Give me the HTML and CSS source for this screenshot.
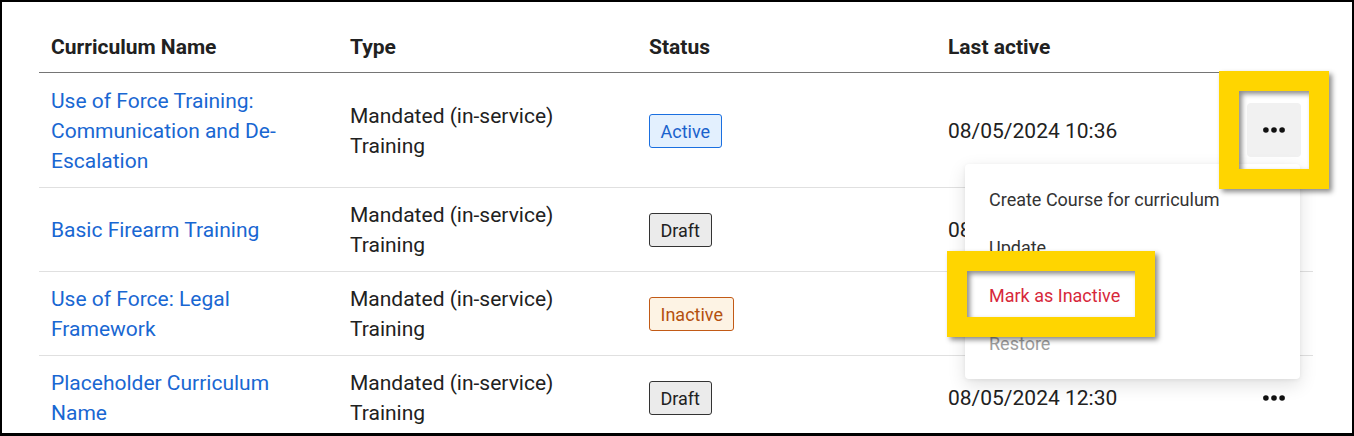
FILE: index.html
```html
<!DOCTYPE html>
<html lang="en">
<head>
<meta charset="utf-8">
<title>Curricula</title>
<link rel="stylesheet" href="styles.css">
</head>
<body>
<div class="frame">
  <div class="table">
    <div class="row head">
      <div class="cell name">Curriculum Name</div>
      <div class="cell">Type</div>
      <div class="cell">Status</div>
      <div class="cell">Last active</div>
      <div class="cell act"></div>
    </div>
    <div class="row first">
      <div class="cell name"><a href="#">Use of Force Training: Communication and De-Escalation</a></div>
      <div class="cell">Mandated (in-service) Training</div>
      <div class="cell"><span class="badge active">Active</span></div>
      <div class="cell">08/05/2024 10:36</div>
      <div class="cell act"><button class="more pressed" type="button" aria-label="More actions"><svg width="22" height="6" viewBox="0 0 22 6"><circle cx="2.9" cy="3" r="2.8"/><circle cx="11" cy="3" r="2.8"/><circle cx="19.1" cy="3" r="2.8"/></svg></button></div>
    </div>
    <div class="row">
      <div class="cell name"><a href="#">Basic Firearm Training</a></div>
      <div class="cell">Mandated (in-service) Training</div>
      <div class="cell"><span class="badge draft">Draft</span></div>
      <div class="cell">08/05/2024 11:02</div>
      <div class="cell act"><button class="more" type="button" aria-label="More actions"><svg width="22" height="6" viewBox="0 0 22 6"><circle cx="2.9" cy="3" r="2.8"/><circle cx="11" cy="3" r="2.8"/><circle cx="19.1" cy="3" r="2.8"/></svg></button></div>
    </div>
    <div class="row">
      <div class="cell name"><a href="#">Use of Force: Legal Framework</a></div>
      <div class="cell">Mandated (in-service) Training</div>
      <div class="cell"><span class="badge inactive">Inactive</span></div>
      <div class="cell">08/05/2024 11:45</div>
      <div class="cell act"><button class="more" type="button" aria-label="More actions"><svg width="22" height="6" viewBox="0 0 22 6"><circle cx="2.9" cy="3" r="2.8"/><circle cx="11" cy="3" r="2.8"/><circle cx="19.1" cy="3" r="2.8"/></svg></button></div>
    </div>
    <div class="row">
      <div class="cell name"><a href="#">Placeholder Curriculum Name</a></div>
      <div class="cell">Mandated (in-service) Training</div>
      <div class="cell"><span class="badge draft">Draft</span></div>
      <div class="cell">08/05/2024 12:30</div>
      <div class="cell act"><button class="more" type="button" aria-label="More actions"><svg width="22" height="6" viewBox="0 0 22 6"><circle cx="2.9" cy="3" r="2.8"/><circle cx="11" cy="3" r="2.8"/><circle cx="19.1" cy="3" r="2.8"/></svg></button></div>
    </div>
  </div>

  <ul class="menu">
    <li>Create Course for curriculum</li>
    <li>Update</li>
    <li class="danger">Mark as Inactive</li>
    <li class="disabled">Restore</li>
  </ul>

  <div class="hl hl-button"></div>
  <div class="hl hl-item"></div>
</div>
</body>
</html>
```

FILE: styles.css
```css
* { box-sizing: border-box; }

html, body {
  margin: 0;
  padding: 0;
  background: #fff;
}

body {
  font-family: Roboto, "Noto Sans", Arial, sans-serif;
  color: #212121;
}

.frame {
  position: relative;
  width: 1354px;
  height: 436px;
  border: 2px solid #000;
  border-bottom-width: 3px;
  background: #fff;
  overflow: hidden;
  padding: 18px 0 0 37px;
}

.table {
  width: 1274px;
}

.row {
  display: grid;
  grid-template-columns: 299px 299px 299px 299px 78px;
  align-items: center;
  border-bottom: 1px solid #e0e0e0;
}

.row.head {
  border-bottom: 1px solid #757575;
  font-weight: 700;
}

.cell {
  padding: 12px 12px 11px;
  font-size: 21px;
  line-height: 30px;
}

.row.first .cell {
  padding-top: 13px;
}

.head .cell {
  padding: 12px 12px 10px;
}

.row .cell.name {
  padding-right: 30px;
}

.cell a {
  color: #1967d2;
  text-decoration: none;
}

.row .cell.act {
  padding: 0;
  display: flex;
  justify-content: center;
}

.badge {
  display: inline-block;
  font-size: 18px;
  line-height: 23px;
  padding: 4.5px 10.5px;
  border: 1.5px solid;
  border-radius: 3px;
  vertical-align: middle;
}

.badge.active {
  background: #e3f0fe;
  border-color: #1a6fe0;
  color: #1a62cc;
}

.badge.draft {
  background: #ebebeb;
  border-color: #333;
  color: #212121;
}

.badge.inactive {
  background: #fdf3e4;
  border-color: #c25a16;
  color: #b4500f;
}

.more {
  width: 54px;
  height: 54px;
  border: 0;
  border-radius: 4px;
  background: transparent;
  display: flex;
  align-items: center;
  justify-content: center;
  padding: 0;
  fill: #111;
}

.more.pressed {
  background: #f1f1f1;
}

.menu {
  position: absolute;
  left: 963px;
  top: 162px;
  width: 335px;
  height: 215px;
  margin: 0;
  padding: 12px 0 10px;
  list-style: none;
  background: #fff;
  border-radius: 4px;
  box-shadow: 0 6px 18px rgba(0, 0, 0, 0.12), 0 1px 4px rgba(0, 0, 0, 0.06);
}

.menu li {
  height: 48px;
  line-height: 48px;
  padding: 0 24px;
  font-size: 18px;
  color: #333;
  white-space: nowrap;
}

.menu li.danger { color: #d7283b; }
.menu li.disabled { color: #9e9e9e; }

.hl {
  position: absolute;
  border: 20px solid #ffd500;
  box-shadow: 3px 3px 5px rgba(0, 0, 0, 0.45), inset 3px 3px 5px rgba(0, 0, 0, 0.45);
}

.hl-button {
  left: 1217px;
  top: 69px;
  width: 110px;
  height: 118px;
}

.hl-item {
  left: 945px;
  top: 249px;
  width: 208px;
  height: 86px;
}
```
